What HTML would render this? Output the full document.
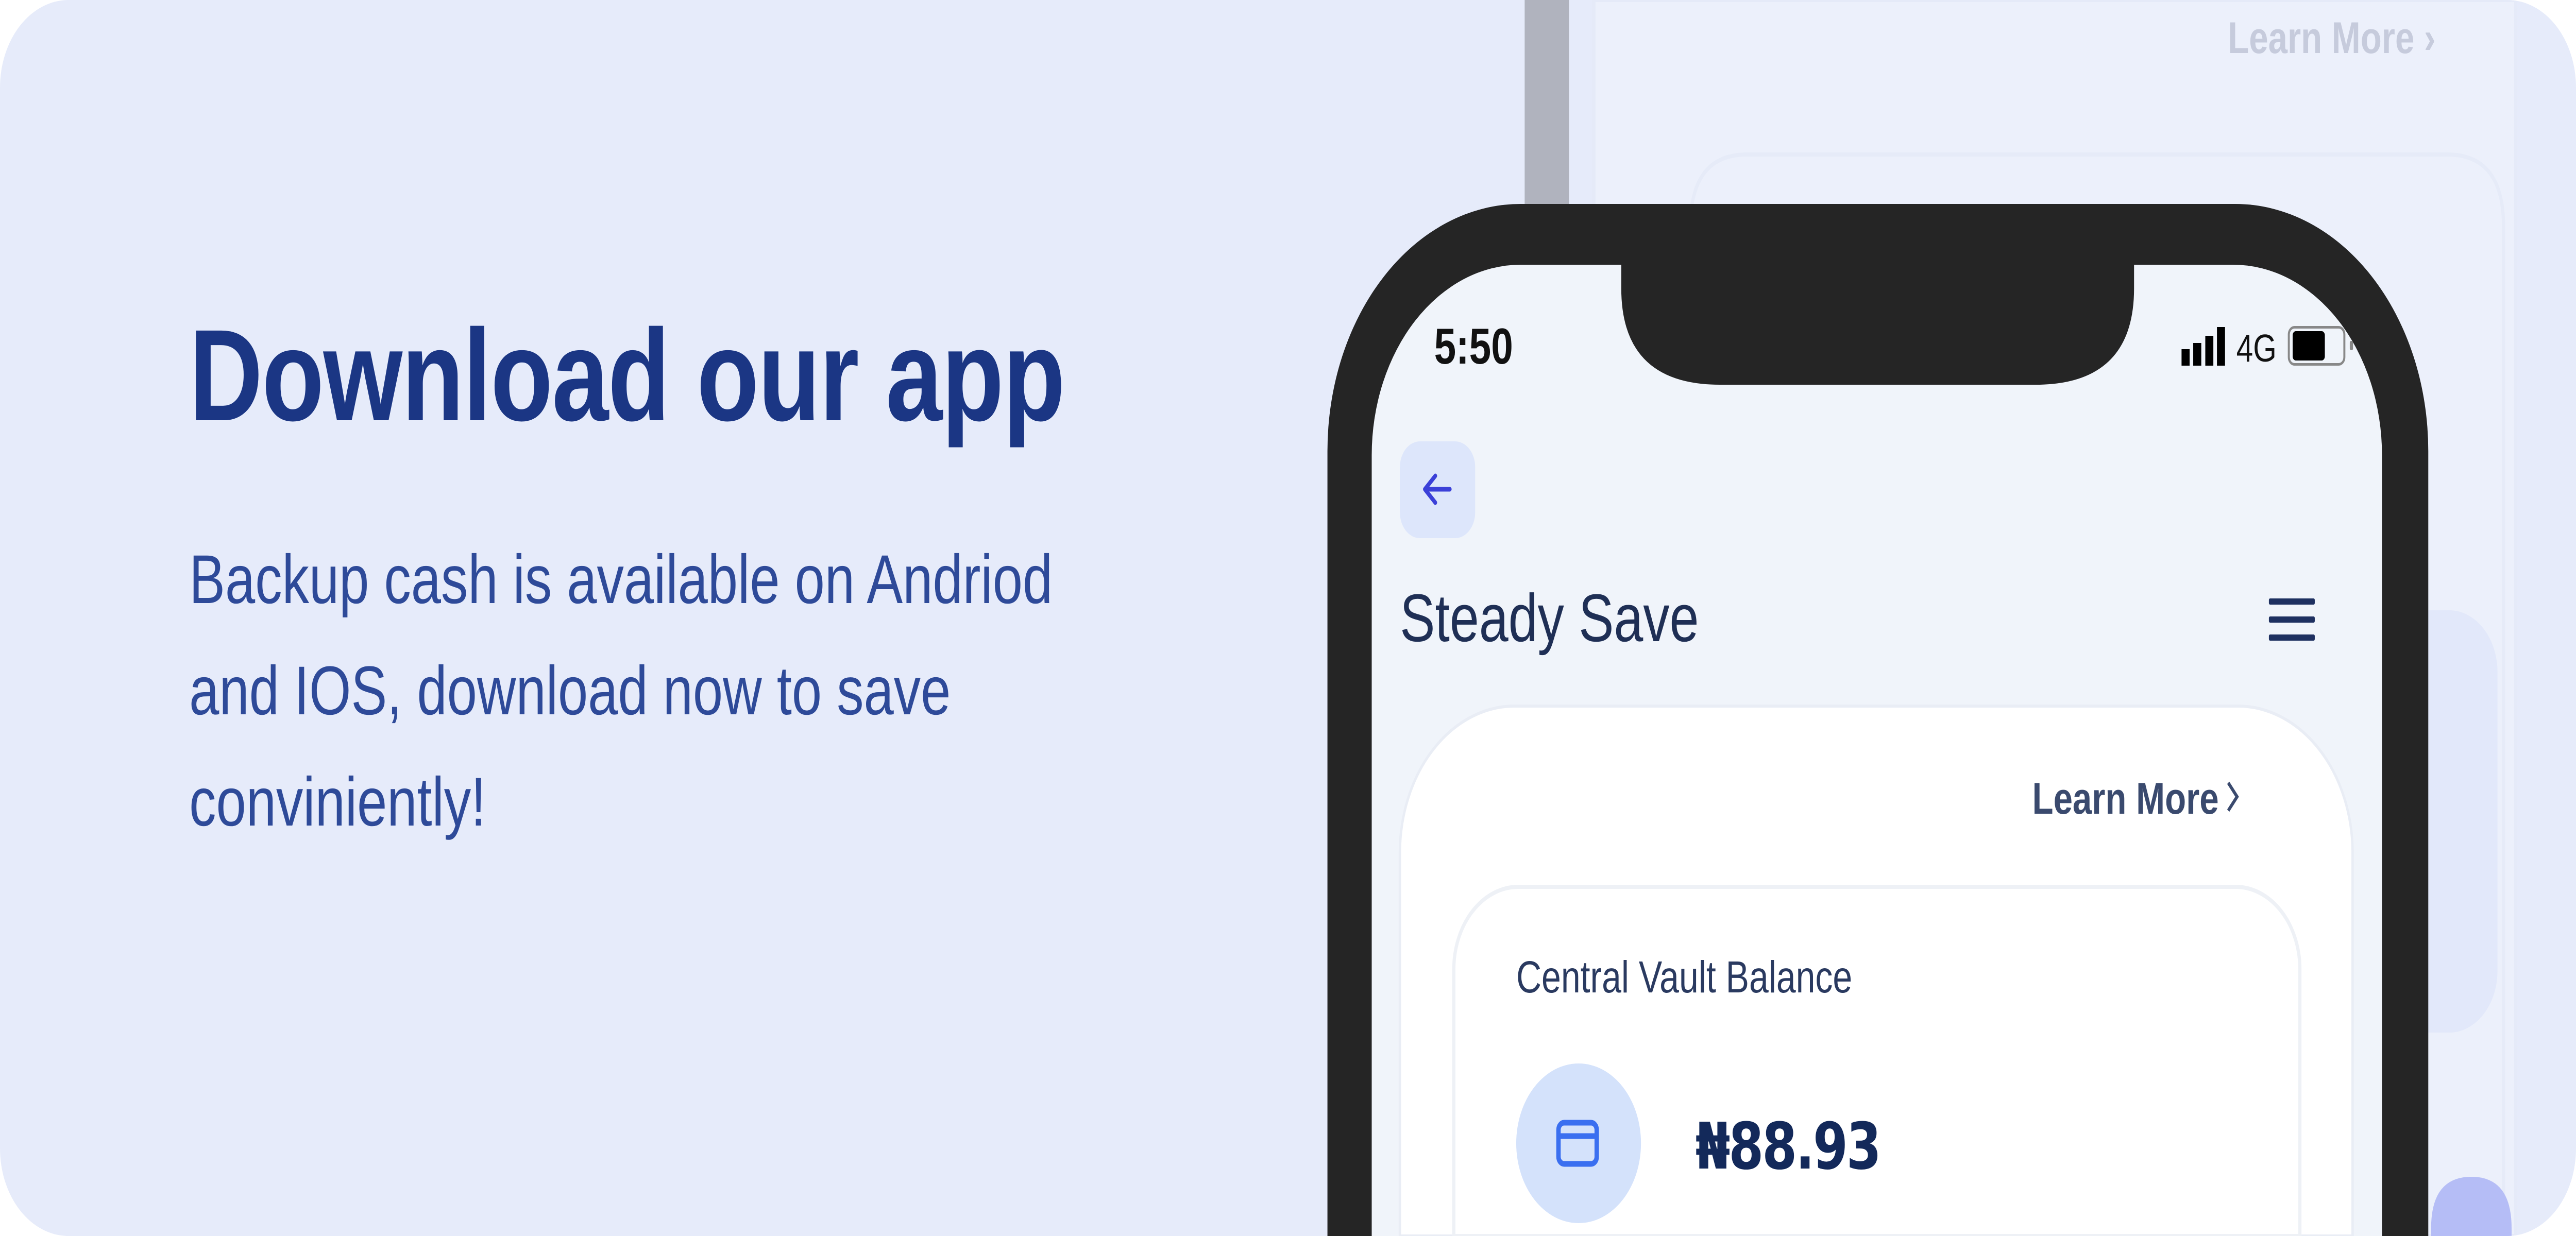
<!DOCTYPE html>
<html><head><meta charset="utf-8"><style>
html,body{margin:0;padding:0;width:100%;height:100%;overflow:hidden;background:#fff}
svg{display:block;width:100vw;height:100vh}
text{font-family:"Liberation Sans","DejaVu Sans",sans-serif}
</style></head><body>
<svg viewBox="0 0 6400 2400" preserveAspectRatio="none" xmlns="http://www.w3.org/2000/svg">
<defs><clipPath id="c"><rect x="0" y="0" width="6400" height="2400" rx="170"/></clipPath></defs>
<g clip-path="url(#c)">
<rect x="0" y="0" width="6400" height="2400" fill="#e6ebfa"/>
<path d="M3960 0 V2400 H6250 V0 Z" fill="#ecf0fb" stroke="#e5eaf8" stroke-width="8"/>
<path d="M4200 2400 V440 Q4200 300 4340 300 H6080 Q6220 300 6220 440 V2400" fill="none" stroke="#e6ebf8" stroke-width="8"/>
<rect x="5225" y="1185" width="980" height="820" rx="120" fill="#e2e8fa"/>
<text x="5535" y="103" font-size="86" font-weight="bold" fill="#c6cbdc">Learn More ›</text>
<path d="M6040 2400 V2385 Q6040 2285 6140 2285 Q6240 2285 6240 2385 V2400 Z" fill="#b5bdf6"/>
<rect x="3788" y="0" width="110" height="420" fill="#b0b3be"/>

<text x="470" y="816" font-size="253" font-weight="bold" fill="#1b3684" letter-spacing="-2">Download our app</text>
<g font-size="134" fill="#2e4a99">
<text x="470" y="1171">Backup cash is available on Andriod</text>
<text x="470" y="1387">and IOS, download now to save</text>
<text x="470" y="1603">conviniently!</text>
</g>

<path d="M3298 2400 V876 A480 480 0 0 1 3778 396 H5553 A480 480 0 0 1 6033 876 V2400 Z" fill="#252525"/>
<path d="M3408 2400 V884 A370 370 0 0 1 3778 514 H5548 A370 370 0 0 1 5918 884 V2400 Z" fill="#f0f4fa"/>
<path d="M4028 514 V560 Q4028 747 4273 747 H5057 Q5302 747 5302 560 V514 Z" fill="#252525"/>
<text x="3563" y="706" font-size="98" font-weight="bold" fill="#111">5:50</text>
<rect x="5420" y="678" width="20" height="32" fill="#000"/>
<rect x="5449" y="666" width="20" height="44" fill="#000"/>
<rect x="5479" y="652" width="20" height="58" fill="#000"/>
<rect x="5508" y="635" width="20" height="75" fill="#000"/>
<text x="5556" y="702" font-size="75" fill="#111">4G</text>
<rect x="5686.5" y="635.5" width="138" height="72" rx="14" fill="none" stroke="#888" stroke-width="5"/>
<rect x="5696" y="643" width="80" height="57" rx="8" fill="#000"/>
<rect x="5838" y="662" width="8" height="18" rx="3" fill="#888"/>

<rect x="3478" y="857" width="187" height="188" rx="50" fill="#dde6fb"/>
<path d="M3602 950H3540M3566 924L3540 950L3566 976" fill="none" stroke="#3b40d8" stroke-width="9" stroke-linecap="round" stroke-linejoin="round"/>
<text x="3478" y="1245" font-size="131" fill="#1f2f55">Steady Save</text>
<rect x="5637" y="1162" width="114" height="12" rx="3" fill="#1e3060"/>
<rect x="5637" y="1197" width="114" height="12" rx="3" fill="#1e3060"/>
<rect x="5637" y="1232" width="114" height="12" rx="3" fill="#1e3060"/>

<path d="M3478 2400 V1656 A285 285 0 0 1 3763 1371 H5560 A285 285 0 0 1 5845 1656 V2400 Z" fill="#fff" stroke="#e9edf5" stroke-width="6"/>
<text x="5049" y="1580" font-size="86" font-weight="bold" fill="#3a4a6e">Learn More</text>
<path d="M5536 1520L5558 1547L5536 1574" fill="none" stroke="#3a4a6e" stroke-width="7"/>
<path d="M3612 2400 V1882 A160 160 0 0 1 3772 1722 H5554 A160 160 0 0 1 5714 1882 V2400 Z" fill="#fff" stroke="#eef1f6" stroke-width="8"/>
<text x="3767" y="1927" font-size="87" fill="#2a3a60">Central Vault Balance</text>
<circle cx="3922" cy="2220" r="155" fill="#d4e2fb"/>
<rect x="3872" y="2180" width="95" height="80" rx="14" fill="none" stroke="#3a6ff0" stroke-width="11"/>
<line x1="3872" y1="2206" x2="3967" y2="2206" stroke="#3a6ff0" stroke-width="11"/>
<text x="4212" y="2269" font-size="125" font-weight="bold" fill="#13295a" letter-spacing="-4" style="font-family:'DejaVu Sans','Liberation Sans',sans-serif">₦88.93</text>
</g>
</svg>
</body></html>
